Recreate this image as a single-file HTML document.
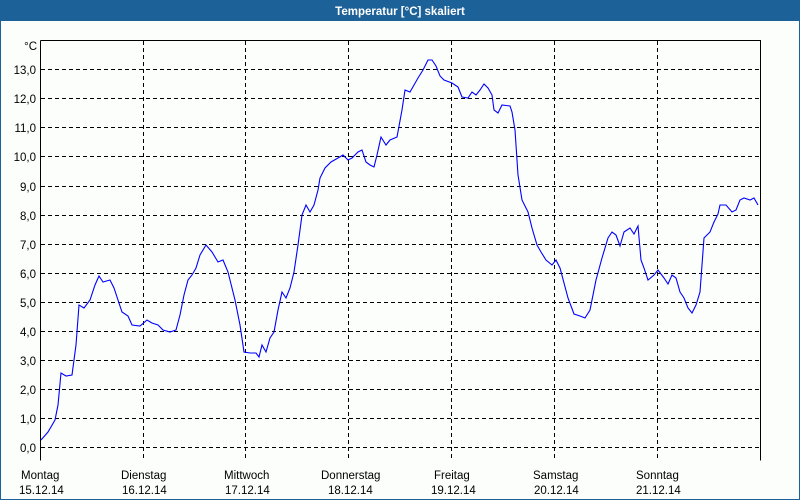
<!DOCTYPE html>
<html><head><meta charset="utf-8"><style>
html,body{margin:0;padding:0;background:#fcfefc;}
svg{display:block;font-family:"Liberation Sans",sans-serif;}
</style></head><body>
<svg width="800" height="500" viewBox="0 0 800 500" xmlns="http://www.w3.org/2000/svg">
<rect x="0" y="0" width="800" height="500" fill="#fcfefc"/>
<rect x="0" y="0" width="800" height="21" fill="#1c6198"/>
<rect x="0" y="0" width="1" height="500" fill="#1c6198"/>
<rect x="799" y="0" width="1" height="500" fill="#1c6198"/>
<rect x="0" y="499" width="800" height="1" fill="#1c6198"/>
<text x="400" y="15" fill="#fff" font-size="11.5" font-weight="bold" text-anchor="middle">Temperatur [°C] skaliert</text>
<g stroke="#000" stroke-width="1" stroke-dasharray="4,3" fill="none" shape-rendering="crispEdges">
<path d="M41 69.5H760M41 98.5H760M41 127.5H760M41 156.5H760M41 186.5H760M41 215.5H760M41 244.5H760M41 273.5H760M41 302.5H760M41 331.5H760M41 360.5H760M41 389.5H760M41 418.5H760M41 447.5H760"/>
<path d="M143.5 41V460M245.5 41V460M348.5 41V460M451.5 41V460M554.5 41V460M657.5 41V460"/>
</g>
<g stroke="#000" stroke-width="1" fill="none" shape-rendering="crispEdges">
<path d="M40.5 40.5H760.5V460.5M40.5 40.5V460.5"/>
</g>
<g font-size="11.5" fill="#000" text-anchor="end">
<text x="37" y="50">°C</text>
<text x="36" y="74">13,0</text><text x="36" y="103">12,0</text><text x="36" y="132">11,0</text>
<text x="36" y="161">10,0</text><text x="36" y="191">9,0</text><text x="36" y="220">8,0</text>
<text x="36" y="249">7,0</text><text x="36" y="278">6,0</text><text x="36" y="307">5,0</text>
<text x="36" y="336">4,0</text><text x="36" y="365">3,0</text><text x="36" y="394">2,0</text>
<text x="36" y="423">1,0</text><text x="36" y="452">0,0</text>
</g>
<g font-size="11.5" fill="#000">
<text x="21" y="479">Montag</text><text x="19" y="494">15.12.14</text>
<text x="121" y="479">Dienstag</text><text x="122" y="494">16.12.14</text>
<text x="224" y="479">Mittwoch</text><text x="225" y="494">17.12.14</text>
<text x="321" y="479">Donnerstag</text><text x="328" y="494">18.12.14</text>
<text x="434" y="479">Freitag</text><text x="431" y="494">19.12.14</text>
<text x="533" y="479">Samstag</text><text x="534" y="494">20.12.14</text>
<text x="636" y="479">Sonntag</text><text x="636" y="494">21.12.14</text>
</g>
<polyline fill="none" stroke="#0000ff" stroke-width="1.1" points="41,440 48,432 55,420 58,405 61,373 66,376 72,375 76,345 79,305 84,308 90,300 95,285 99,276 103,282 110,280 114,288 118,300 122,312 128,316 132,325 140,326 147,320 152,323 158,325 163,330 170,332 176,330 180,315 184,295 188,280 192,275 196,268 200,255 206,245 212,252 218,262 223,260 228,272 235,300 240,325 244,352 250,353 256,353 259,357 262,345 266,352 270,338 274,332 278,310 282,292 286,298 290,288 294,272 298,245 302,215 306,205 310,212 314,205 318,190 320,178 325,168 331,162 338,158 343,155 348,160 352,158 355,155 358,152 362,150 366,162 370,165 374,167 377,155 381,137 386,145 390,140 397,137 402,110 405,90 410,92 414,85 418,78 423,70 428,60 432,60 436,66 440,76 444,80 452,83 458,87 462,97 468,98 472,92 476,95 480,90 484,84 488,88 492,95 494,110 498,113 502,105 510,106 512,112 515,130 518,175 522,200 528,212 532,228 537,245 541,252 546,260 552,265 556,260 560,268 568,298 574,314 580,316 585,318 590,310 596,280 602,258 608,238 612,232 616,235 620,246 624,232 630,228 634,234 638,226 641,260 644,268 648,280 654,275 658,270 664,278 668,284 672,275 676,278 680,292 684,298 688,308 692,313 696,305 700,292 704,238 710,232 714,222 718,214 720,205 726,205 732,212 736,210 740,200 744,198 750,200 754,198 758,205"/>
</svg>
</body></html>
